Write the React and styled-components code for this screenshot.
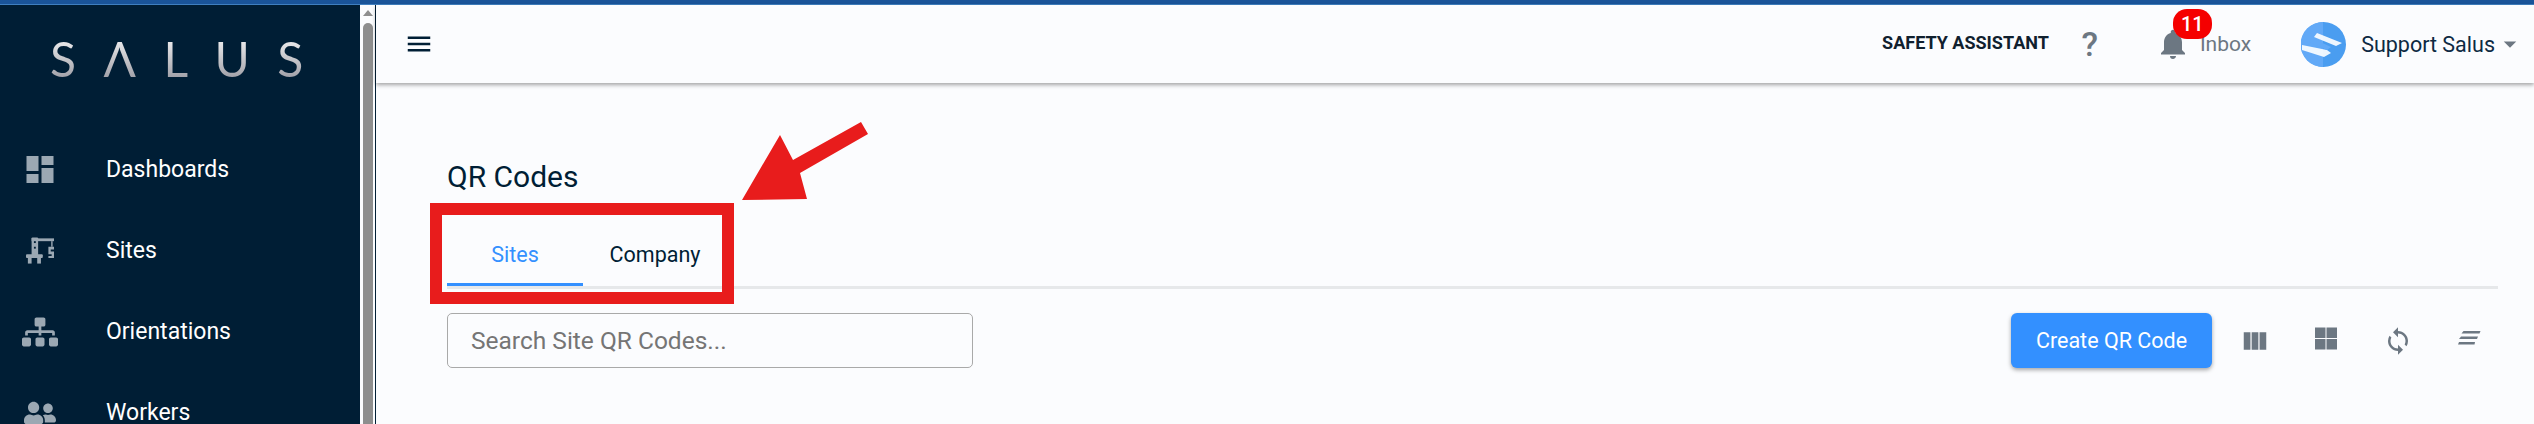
import styled, { createGlobalStyle } from 'styled-components';
import { MdDashboard, MdMenu, MdNotifications, MdViewColumn, MdSync, MdArrowDropDown } from 'react-icons/md';
import { FaSitemap, FaUserFriends } from 'react-icons/fa';

const GlobalStyle = createGlobalStyle`
  html, body {
    margin: 0;
    height: 100%;
    overflow: hidden;
    background: #fbfcfe;
    font-family: Roboto, "Liberation Sans", sans-serif;
  }
  * { box-sizing: border-box; }
`;

const Page = styled.div`
  width: 2534px;
  height: 424px;
  display: flex;
  flex-direction: column;
  overflow: hidden;
  position: relative;
`;

const TopStrip = styled.div`
  height: 5px;
  flex: none;
  background: #1a5499;
  border-bottom: 1px solid #3f7fc0;
`;

const Shell = styled.div`
  flex: 1;
  display: flex;
  min-height: 0;
`;

const Sidebar = styled.aside`
  width: 360px;
  flex: none;
  background: #001e35;
  overflow: hidden;
`;

const Logo = styled.div`
  height: 83px;
  margin-top: 26px;
  padding-left: 50px;
  font-family: Lato, sans-serif;
  font-weight: 400;
  font-size: 48px;
  line-height: 56px;
  letter-spacing: 27.5px;
  white-space: nowrap;
  & span {
    background: linear-gradient(#ffffff, #8f8f98);
    -webkit-background-clip: text;
    background-clip: text;
    color: transparent;
  }
`;

const NavList = styled.nav`
  display: flex;
  flex-direction: column;
  margin-top: 15px;
`;

const NavItem = styled.div`
  height: 81px;
  flex: none;
  display: flex;
  align-items: center;
  color: #ffffff;
  font-size: 23px;
  & svg {
    color: #9ba8b3;
  }
`;

const NavIcon = styled.div`
  width: 106px;
  padding-left: 22px;
  padding-right: 48px;
  flex: none;
  display: flex;
  justify-content: center;
`;

const ScrollTrack = styled.div`
  width: 16px;
  flex: none;
  padding-top: 5px;
  display: flex;
  flex-direction: column;
  align-items: center;
  background: #fbfcfe;
  border-right: 1px solid #001e35;
`;

const ScrollUp = styled.div`
  width: 0;
  height: 0;
  border-left: 5px solid transparent;
  border-right: 5px solid transparent;
  border-bottom: 6px solid #8e8e8e;
`;

const ScrollThumb = styled.div`
  width: 10px;
  flex: 1;
  margin-top: 7px;
  border-radius: 5px 5px 0 0;
  background: #8e8e8e;
`;

const Main = styled.main`
  flex: 1;
  min-width: 0;
  display: flex;
  flex-direction: column;
`;

const Header = styled.header`
  height: 78px;
  flex: none;
  display: flex;
  align-items: center;
  padding: 0 9px 0 28px;
  background: #fbfcfe;
  box-shadow: 0 2px 4px rgba(0, 0, 0, 0.35);
  color: #001e35;
`;

const Burger = styled.div`
  display: flex;
  margin-right: auto;
`;

const AssistantLabel = styled.div`
  font-size: 18px;
  font-weight: 700;
  color: #10202e;
  margin-top: -4px;
`;

const Help = styled.div`
  margin-left: 31px;
  width: 20px;
  font-size: 34px;
  font-weight: 500;
  color: #6c7782;
  text-align: center;
`;

const InboxButton = styled.div`
  position: relative;
  display: flex;
  align-items: center;
  gap: 9px;
  margin-left: 55px;
  color: #6c7782;
  font-size: 21px;
`;

const Badge = styled.span`
  position: absolute;
  top: -17px;
  left: 18px;
  min-width: 39px;
  height: 30px;
  border-radius: 14px;
  background: #f50000;
  color: #ffffff;
  font-size: 20px;
  font-weight: 500;
  text-align: center;
  line-height: 30px;
`;

const UserMenu = styled.div`
  display: flex;
  align-items: center;
  margin-left: 50px;
  font-size: 21.5px;
  color: #0d2a42;
`;

const UserName = styled.span`
  margin-left: 15px;
`;

const Caret = styled.span`
  display: flex;
  color: #6c7782;
`;

const Content = styled.section`
  flex: 1;
  padding: 0 36px 0 71px;
`;

const Title = styled.h1`
  margin: 76px 0 0;
  font-size: 30px;
  line-height: 36px;
  font-weight: 400;
  color: #001e35;
`;

const TabBar = styled.div`
  display: flex;
  height: 73px;
  margin-top: 21px;
  border-bottom: 3px solid #e6e8ea;
`;

const Tab = styled.div`
  width: ${({ $w }) => $w}px;
  height: 70px;
  padding-top: 10px;
  display: flex;
  align-items: center;
  justify-content: center;
  font-size: 21.5px;
  color: ${({ $active }) => ($active ? '#3390ff' : '#001e35')};
  border-bottom: 3px solid ${({ $active }) => ($active ? '#3390ff' : 'transparent')};
`;

const Toolbar = styled.div`
  display: flex;
  align-items: center;
  margin-top: 24px;
`;

const SearchInput = styled.input`
  width: 526px;
  height: 55px;
  padding: 0 23px;
  border: 1.5px solid #a9a9a9;
  border-radius: 5px;
  background: transparent;
  font-family: inherit;
  font-size: 24.5px;
  margin-right: auto;
  &::placeholder {
    color: #757575;
    opacity: 1;
  }
`;

const PrimaryButton = styled.button`
  width: 201px;
  height: 55px;
  border: 0;
  border-radius: 6px;
  background: #3390ff;
  color: #ffffff;
  font-family: inherit;
  font-size: 21.5px;
  box-shadow: 0 2px 4px rgba(0, 0, 0, 0.35);
`;

const ToolIcon = styled.div`
  width: 71.5px;
  display: flex;
  justify-content: center;
  color: #6c7782;
`;

const ToolIcons = styled.div`
  display: flex;
  margin: 0 -7px 0 7px;
`;

const Callout = styled.div`
  position: absolute;
  left: 430px;
  top: 203px;
  width: 304px;
  height: 101px;
  border: 12px solid #e81c1c;
  pointer-events: none;
`;

const CalloutArrow = styled.svg`
  position: absolute;
  left: 735px;
  top: 122px;
`;

const CraneIcon = () => (
  <svg width="28" height="27" viewBox="0 0 30 28" fill="currentColor">
    <rect x="6" y="1" width="24" height="3" />
    <rect x="6" y="0" width="7" height="20" rx="1" />
    <rect x="27" y="4" width="1.5" height="6" />
    <path d="M24 10h6v3h-3.500v2H30v7h-6v-2h3.500v-2H24z" />
    <rect x="0" y="18" width="18" height="4" rx="1" />
    <rect x="2" y="22" width="4" height="6" />
    <rect x="12" y="22" width="4" height="6" />
    <rect x="8.5" y="4" width="2" height="2" fill="#001e35" />
    <rect x="8.5" y="10" width="2" height="2" fill="#001e35" />
  </svg>
);

const GridIcon = () => (
  <svg width="24" height="24" viewBox="0 0 24 24" fill="currentColor">
    <rect x="1" y="1.500" width="10.5" height="10.5" />
    <rect x="12.500" y="1.500" width="10.5" height="10.5" />
    <rect x="1" y="13" width="10.5" height="10.5" />
    <rect x="12.500" y="13" width="10.5" height="10.5" />
  </svg>
);

const DensityIcon = () => (
  <svg width="24" height="24" viewBox="0 0 24 24" fill="currentColor">
    <path d="M6.500 5h17l-1 2.500H4.500z" />
    <path d="M4 10.500h17l-1 2.500H2z" />
    <path d="M2 16h16l-.5 2.500H1z" />
  </svg>
);

const AvatarMark = () => (
  <svg width="45" height="45" viewBox="0 0 45 45">
    <circle cx="22.5" cy="22.5" r="22.5" fill="#4a9df0" />
    <path d="M22 0a22.500 22.500 0 0 0 0 45z" fill="#62a9f7" />
    <path d="M16 11 L41 21 L35 24 L13 15z" fill="#ffffff" opacity="0.9" />
    <path d="M1 23 L26 28 L30 31 L23 35 L1 28z" fill="#ffffff" opacity="0.9" />
    <path d="M11 16 L30 25 L26 28 L8 20z" fill="#62a9f7" />
  </svg>
);

const navItems = [
  { label: 'Dashboards', icon: <MdDashboard size={37} /> },
  { label: 'Sites', icon: <CraneIcon /> },
  { label: 'Orientations', icon: <FaSitemap size={36} /> },
  { label: 'Workers', icon: <FaUserFriends size={32} /> },
];

const App = () => (
  <Page>
    <GlobalStyle />
    <TopStrip />
    <Shell>
      <Sidebar>
        <Logo><span>SΛLUS</span></Logo>
        <NavList>
          {navItems.map((item) => (
            <NavItem key={item.label}>
              <NavIcon>{item.icon}</NavIcon>
              {item.label}
            </NavItem>
          ))}
        </NavList>
      </Sidebar>
      <ScrollTrack>
        <ScrollUp />
        <ScrollThumb />
      </ScrollTrack>
      <Main>
        <Header>
          <Burger><MdMenu size={30} /></Burger>
          <AssistantLabel>SAFETY ASSISTANT</AssistantLabel>
          <Help>?</Help>
          <InboxButton>
            <MdNotifications size={36} />
            <Badge>11</Badge>
            Inbox
          </InboxButton>
          <UserMenu>
            <AvatarMark />
            <UserName>Support Salus</UserName>
            <Caret><MdArrowDropDown size={30} /></Caret>
          </UserMenu>
        </Header>
        <Content>
          <Title>QR Codes</Title>
          <TabBar>
            <Tab $active $w={136}>Sites</Tab>
            <Tab $w={144}>Company</Tab>
          </TabBar>
          <Toolbar>
            <SearchInput placeholder="Search Site QR Codes..." />
            <PrimaryButton>Create QR Code</PrimaryButton>
            <ToolIcons>
              <ToolIcon><MdViewColumn size={30} /></ToolIcon>
              <ToolIcon><GridIcon /></ToolIcon>
              <ToolIcon><MdSync size={30} /></ToolIcon>
              <ToolIcon><DensityIcon /></ToolIcon>
            </ToolIcons>
          </Toolbar>
        </Content>
      </Main>
    </Shell>
    <Callout />
    <CalloutArrow width="135" height="85" viewBox="0 0 135 85">
      <path d="M7 78 L45 13 L58 38 L126 0 L133 12 L65 51 L72 77 Z" fill="#e81c1c" />
    </CalloutArrow>
  </Page>
);

export default App;
